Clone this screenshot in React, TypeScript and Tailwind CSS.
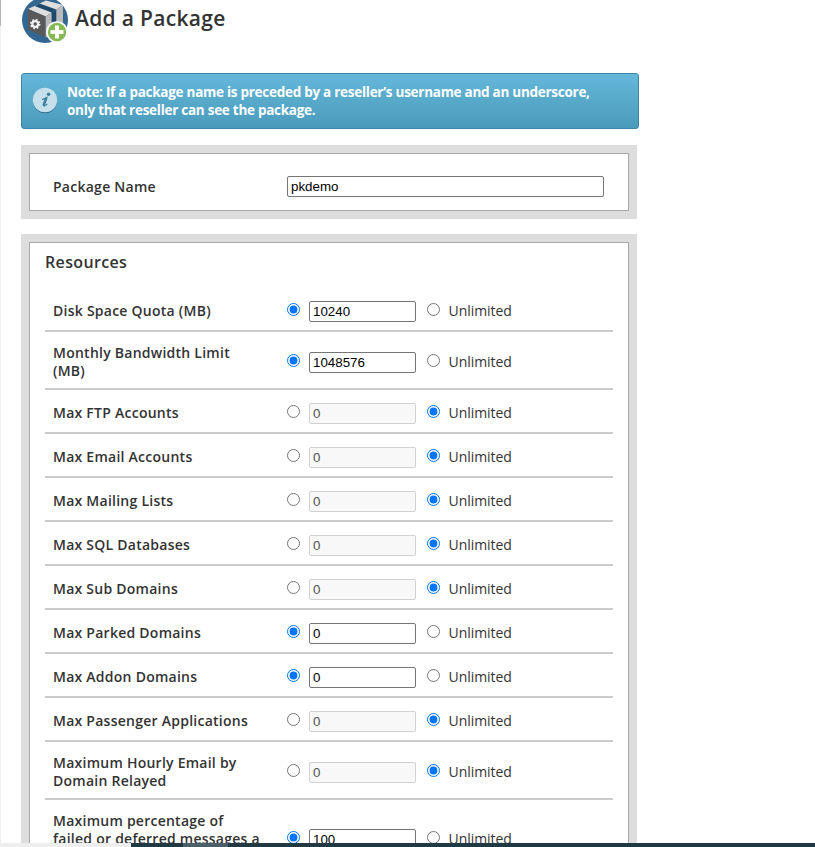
type Row = { lines: string[]; value: string; limited: boolean };

const rows: Row[] = [
  { lines: ['Disk Space Quota (MB)'], value: '10240', limited: true },
  { lines: ['Monthly Bandwidth Limit', '(MB)'], value: '1048576', limited: true },
  { lines: ['Max FTP Accounts'], value: '0', limited: false },
  { lines: ['Max Email Accounts'], value: '0', limited: false },
  { lines: ['Max Mailing Lists'], value: '0', limited: false },
  { lines: ['Max SQL Databases'], value: '0', limited: false },
  { lines: ['Max Sub Domains'], value: '0', limited: false },
  { lines: ['Max Parked Domains'], value: '0', limited: true },
  { lines: ['Max Addon Domains'], value: '0', limited: true },
  { lines: ['Max Passenger Applications'], value: '0', limited: false },
  { lines: ['Maximum Hourly Email by', 'Domain Relayed'], value: '0', limited: false },
  { lines: ['Maximum percentage of', 'failed or deferred messages a'], value: '100', limited: true },
];

function PackageIcon() {
  return (
    <svg className="block h-[46px] w-[48px] shrink-0" viewBox="0 0 48 46">
      <circle cx="24" cy="20" r="23" fill="#336791" />
      <path d="M7 9 L25 0.5 L42 5 L24.7 16.5 Z" fill="#dedede" />
      <path d="M7 9 L24.7 16.5 V37.5 L7 29.5 Z" fill="#595959" />
      <path d="M24.7 16.5 L42 5 V28 L24.7 37.5 Z" fill="#bababa" />
      <path d="M13.6 5.9 L18.6 3.5 L35.3 9.4 L30.6 12.6 Z" fill="#1d4a6c" />
      <path d="M30.6 12.6 L35.3 9.4 V26 L30.6 28 Z" fill="#1d4a6c" />
      <circle cx="14.2" cy="24" r="2.9" fill="none" stroke="#f2f2f2" strokeWidth="2.2" />
      <circle cx="14.2" cy="24" r="4.4" fill="none" stroke="#f2f2f2" strokeWidth="1.7" strokeDasharray="1.75 1.705" />
      <circle cx="36" cy="32" r="10.8" fill="#fff" />
      <circle cx="36" cy="32" r="9.2" fill="#84b954" />
      <path d="M36 25.5 V38.5 M29.5 32 H42.5" stroke="#fff" strokeWidth="4" />
    </svg>
  );
}

function InfoIcon() {
  return (
    <svg className="block h-7 w-7 shrink-0" viewBox="0 0 28 28">
      <circle cx="13" cy="14.2" r="12" fill="#2f6f8b" />
      <circle cx="13" cy="13" r="12.2" fill="#c5e0eb" />
      <circle cx="16.6" cy="7.2" r="1.8" fill="#397f9d" />
      <path d="M10 12.6 Q12.5 11.9 14.8 10.6 L11.8 18 Q11.3 20.3 15.3 17" fill="none" stroke="#397f9d" strokeWidth="1.2" />
      <path d="M14.2 11.3 L11.4 18.6" stroke="#397f9d" strokeWidth="2.4" />
    </svg>
  );
}

function ResourceRow({ row, index, last }: { row: Row; index: number; last: boolean }) {
  return (
    <div
      className={
        'flex items-center border-[#cccccc] pl-2 ' +
        (last ? 'h-[74px]' : row.lines.length > 1 ? 'h-[58px] border-b-2' : 'h-[44px] border-b-2')
      }
    >
      <div
        className={
          'w-[234px] shrink-0 whitespace-nowrap leading-[18px] font-semibold tracking-[0.25px] ' +
          (last ? 'self-start pt-3' : 'pt-[3px]')
        }
      >
        {row.lines.map((line) => (
          <div key={line}>{line}</div>
        ))}
      </div>
      <input type="radio" name={'row' + index} defaultChecked={row.limited} className="m-0 mt-px h-[13px] w-[13px]" />
      <input
        type="text"
        defaultValue={row.value}
        disabled={!row.limited}
        className="mt-[5px] ml-[9px] h-[21px] w-[107px] rounded-[2px] border border-[#767676] bg-white px-[3px] font-['Liberation_Sans',Arial,sans-serif] text-[13.333px] text-black disabled:border-[#d1d1d1] disabled:bg-[#f8f8f8] disabled:text-[#545454]"
      />
      <input type="radio" name={'row' + index} defaultChecked={!row.limited} className="m-0 mt-px ml-[11px] h-[13px] w-[13px]" />
      <span className="ml-[8.5px] pt-[3px] leading-[18px] tracking-[-0.05px]">Unlimited</span>
    </div>
  );
}

export default function App() {
  return (
    <div className="flex h-[847px] w-[815px] flex-col overflow-hidden bg-white font-['Open_Sans',sans-serif] text-[14px] text-[#333333]">
      <div className="flex h-[843px] overflow-hidden">
        <div className="w-px shrink-0 bg-[#f0f0f0]">
          <div className="h-[26px] bg-[#b4b4b4]" />
        </div>
        <main className="ml-5 w-[618px] shrink-0">
          <header className="flex h-[46px]">
            <PackageIcon />
            <h1 className="ml-[6px] pt-[4px] text-[21px] leading-7 font-semibold tracking-[0.32px]">Add a Package</h1>
          </header>
          <div className="mt-[27px] flex h-14 rounded-[3px] border border-[#3c86a6] bg-gradient-to-b from-[#65b8d9] to-[#4a9abb] pt-[13px] pl-[10px]">
            <InfoIcon />
            <p className="-mt-[4px] ml-[7px] text-[13.5px] leading-[18px] font-bold tracking-[-0.27px] whitespace-nowrap text-white">
              Note: If a package name is preceded by a reseller’s username and an underscore,
              <br />
              only that reseller can see the package.
            </p>
          </div>
          <section className="mt-4 w-[616px] bg-[#dddddd] p-2">
            <div className="flex h-[58px] items-center border border-[#aaaaaa] bg-white pt-[9px] pl-[23px]">
              <label className="w-[234px] font-semibold tracking-[0.26px]">Package Name</label>
              <input
                type="text"
                defaultValue="pkdemo"
                className="h-[21px] w-[317px] rounded-[2px] border border-[#767676] px-[3px] font-['Liberation_Sans',Arial,sans-serif] text-[13.333px] text-black"
              />
            </div>
          </section>
          <section className="mt-[15px] w-[616px] bg-[#dddddd] p-2">
            <div className="h-[640px] border border-[#aaaaaa] bg-white px-[15px]">
              <h2 className="h-[45px] pt-[7px] text-[16px] leading-6 font-semibold tracking-[0.35px]">Resources</h2>
              {rows.map((row, i) => (
                <ResourceRow key={row.lines[0]} row={row} index={i} last={i === rows.length - 1} />
              ))}
            </div>
          </section>
        </main>
      </div>
      <footer className="flex h-1 bg-[#213943]">
        <div className="w-[131px] bg-[#eeeeee]" />
        <div className="ml-[52px] w-[45px] bg-[#4c6068]" />
      </footer>
    </div>
  );
}
